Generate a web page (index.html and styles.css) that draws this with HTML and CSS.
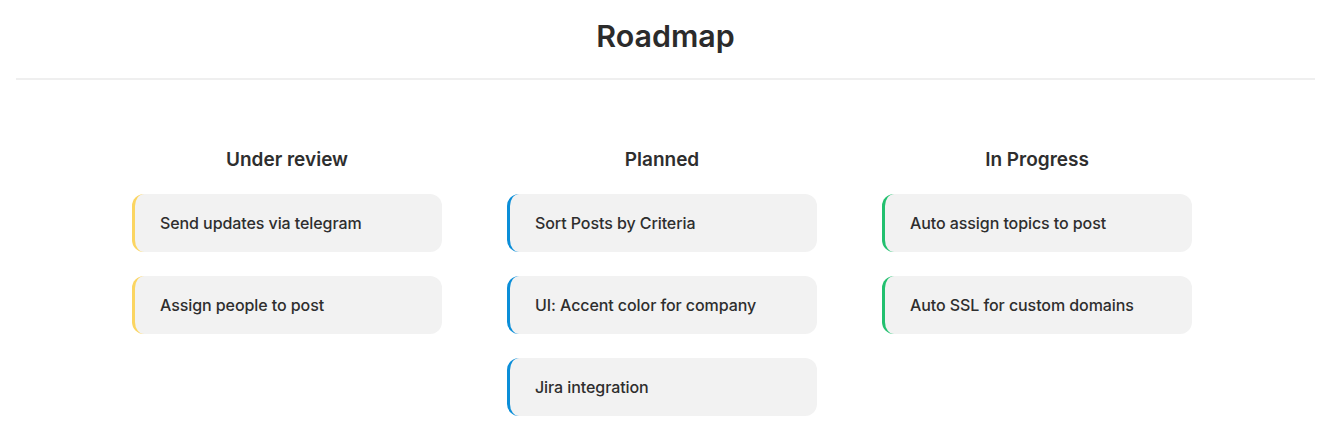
FILE: index.html
```html
<!DOCTYPE html>
<html lang="en">
<head>
<meta charset="utf-8">
<title>Roadmap</title>
<link rel="stylesheet" href="styles.css">
</head>
<body>
  <header class="page-header">
    <h1 class="page-title">Roadmap</h1>
  </header>
  <main class="board">
    <section class="column">
      <h2 class="column-title">Under review</h2>
      <div class="card card-review">Send updates via telegram</div>
      <div class="card card-review">Assign people to post</div>
    </section>
    <section class="column">
      <h2 class="column-title">Planned</h2>
      <div class="card card-planned">Sort Posts by Criteria</div>
      <div class="card card-planned">UI: Accent color for company</div>
      <div class="card card-planned">Jira integration</div>
    </section>
    <section class="column">
      <h2 class="column-title">In Progress</h2>
      <div class="card card-progress">Auto assign topics to post</div>
      <div class="card card-progress">Auto SSL for custom domains</div>
    </section>
  </main>
</body>
</html>
```

FILE: styles.css
```css
* { box-sizing: border-box; }

html, body {
  margin: 0;
  padding: 0;
  background: #ffffff;
}

body {
  font-family: Inter, "Noto Sans", sans-serif;
  color: #2e2e2e;
}

.page-header {
  margin: 0 13px 0 16px;
  border-bottom: 2px solid #efefef;
  height: 80px;
  display: flex;
  align-items: center;
  justify-content: center;
  padding-bottom: 6px;
}

.page-title {
  margin: 0;
  font-size: 30.4px;
  font-weight: 600;
  color: #2b2b2b;
}

.board {
  display: grid;
  grid-template-columns: repeat(3, 310px);
  column-gap: 65px;
  justify-content: center;
  padding: 69px 4px 0 0;
}

.column {
  display: flex;
  flex-direction: column;
  gap: 24px;
}

.column-title {
  margin: 0 0 -1px;
  text-align: center;
  font-size: 19px;
  font-weight: 600;
  line-height: 22px;
  color: #2e2e2e;
}

.card {
  height: 58px;
  display: flex;
  align-items: center;
  padding-left: 25px;
  background: #f2f2f2;
  border-radius: 12px;
  border-left: 3px solid transparent;
  font-size: 16px;
  font-weight: 500;
  letter-spacing: -0.08px;
  color: #2e2e2e;
}

.card-review { border-left-color: #fbd561; }
.card-planned { border-left-color: #0b8ed8; }
.card-progress { border-left-color: #22c06f; }
```
